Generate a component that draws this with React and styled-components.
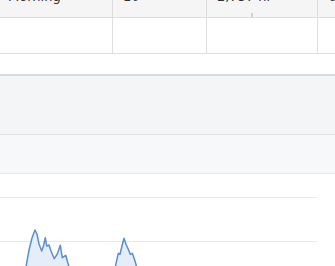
import React from "react";
import styled, { createGlobalStyle } from "styled-components";

const Global = createGlobalStyle`
  html, body { margin: 0; padding: 0; background: #fff; overflow: hidden; }
  body { font-family: "DejaVu Sans", "Noto Sans", sans-serif; color: #333; }
`;

const Page = styled.div`
  width: 335px;
  height: 266px;
  overflow: hidden;
  display: flex;
  flex-direction: column;
`;

const Table = styled.div`
  display: flex;
  flex-direction: column;
  margin-top: -23px;
`;

const Row = styled.div`
  display: grid;
  grid-template-columns: 113px 94px 111px 1fr;
  height: ${(p) => p.$h}px;
  background: ${(p) => (p.$head ? "#f5f5f5" : "#fff")};
  border-bottom: 1px solid #dedede;
  box-sizing: border-box;
`;

const Cell = styled.div`
  position: relative;
  border-right: 1px solid #dedede;
  padding: 0 0 ${(p) => (p.$head ? 12 : 0)}px ${(p) => (p.$first ? 8 : 10)}px;
  display: flex;
  align-items: flex-end;
  font-size: 13px;
  line-height: 16px;
  white-space: nowrap;
  overflow: hidden;
  box-sizing: border-box;
  &:last-child { border-right: none; }
`;

const Tick = styled.span`
  position: absolute;
  left: 44px;
  bottom: 0;
  width: 2px;
  height: 4px;
  background: #d2d2d2;
`;

const Gap = styled.div`
  height: 21px;
  background: #fff;
`;

const Panel = styled.div`
  height: ${(p) => p.$h}px;
  background: ${(p) => p.$bg};
  border-top: ${(p) => p.$bw}px solid ${(p) => p.$bc};
`;

const ChartArea = styled.div`
  flex: 1;
  background: #fff;
  border-top: 1px solid #e6e8eb;
`;

const first = [
  [26, 93], [29, 76], [32, 64], [35, 56], [37, 60], [39, 70], [41.7, 77], [43.5, 72], [45.3, 63.7],
  [46.7, 72], [49, 71], [51, 77], [54.3, 84.7], [57.3, 80], [60.3, 71.3], [62.3, 83.7],
  [65.7, 81.3], [66.7, 84.7], [69, 93],
];
const second = [
  [115.3, 93], [118.3, 79.3], [120, 80.3], [122, 72], [124, 64.3], [126, 70.3], [128.3, 75.3],
  [130.3, 80.3], [132.3, 79.3], [135, 87], [136.7, 93],
];

const pts = (a) => a.map(([x, y]) => `${x},${y}`).join(" ");

function Chart() {
  return (
    <svg width="335" height="92" viewBox="0 0 335 92" style={{ display: "block" }}>
      <line x1="0" y1="23.5" x2="317" y2="23.5" stroke="#e8e8e8" strokeWidth="1" />
      <line x1="0" y1="67.5" x2="317" y2="67.5" stroke="#e8e8e8" strokeWidth="1" />
      {[first, second].map((s, i) => (
        <g key={i}>
          <polygon points={pts(s)} fill="#e4edf8" />
          <polyline points={pts(s)} fill="none" stroke="#5a8fcf" strokeWidth="1.5" strokeLinejoin="round" />
        </g>
      ))}
    </svg>
  );
}

export default function App() {
  return (
    <Page>
      <Global />
      <Table>
        <Row $head $h={41}>
          <Cell $head $first>Morning</Cell>
          <Cell $head>10</Cell>
          <Cell $head>
            2,737 hr
            <Tick />
          </Cell>
          <Cell $head>6</Cell>
        </Row>
        <Row $h={36}>
          <Cell $first />
          <Cell />
          <Cell />
          <Cell />
        </Row>
      </Table>
      <Gap />
      <Panel $h={59} $bg="#f4f5f7" $bw={2} $bc="#d7dbe0" />
      <Panel $h={39} $bg="#f7f8fa" $bw={1} $bc="#dfe3e8" />
      <ChartArea>
        <Chart />
      </ChartArea>
    </Page>
  );
}
